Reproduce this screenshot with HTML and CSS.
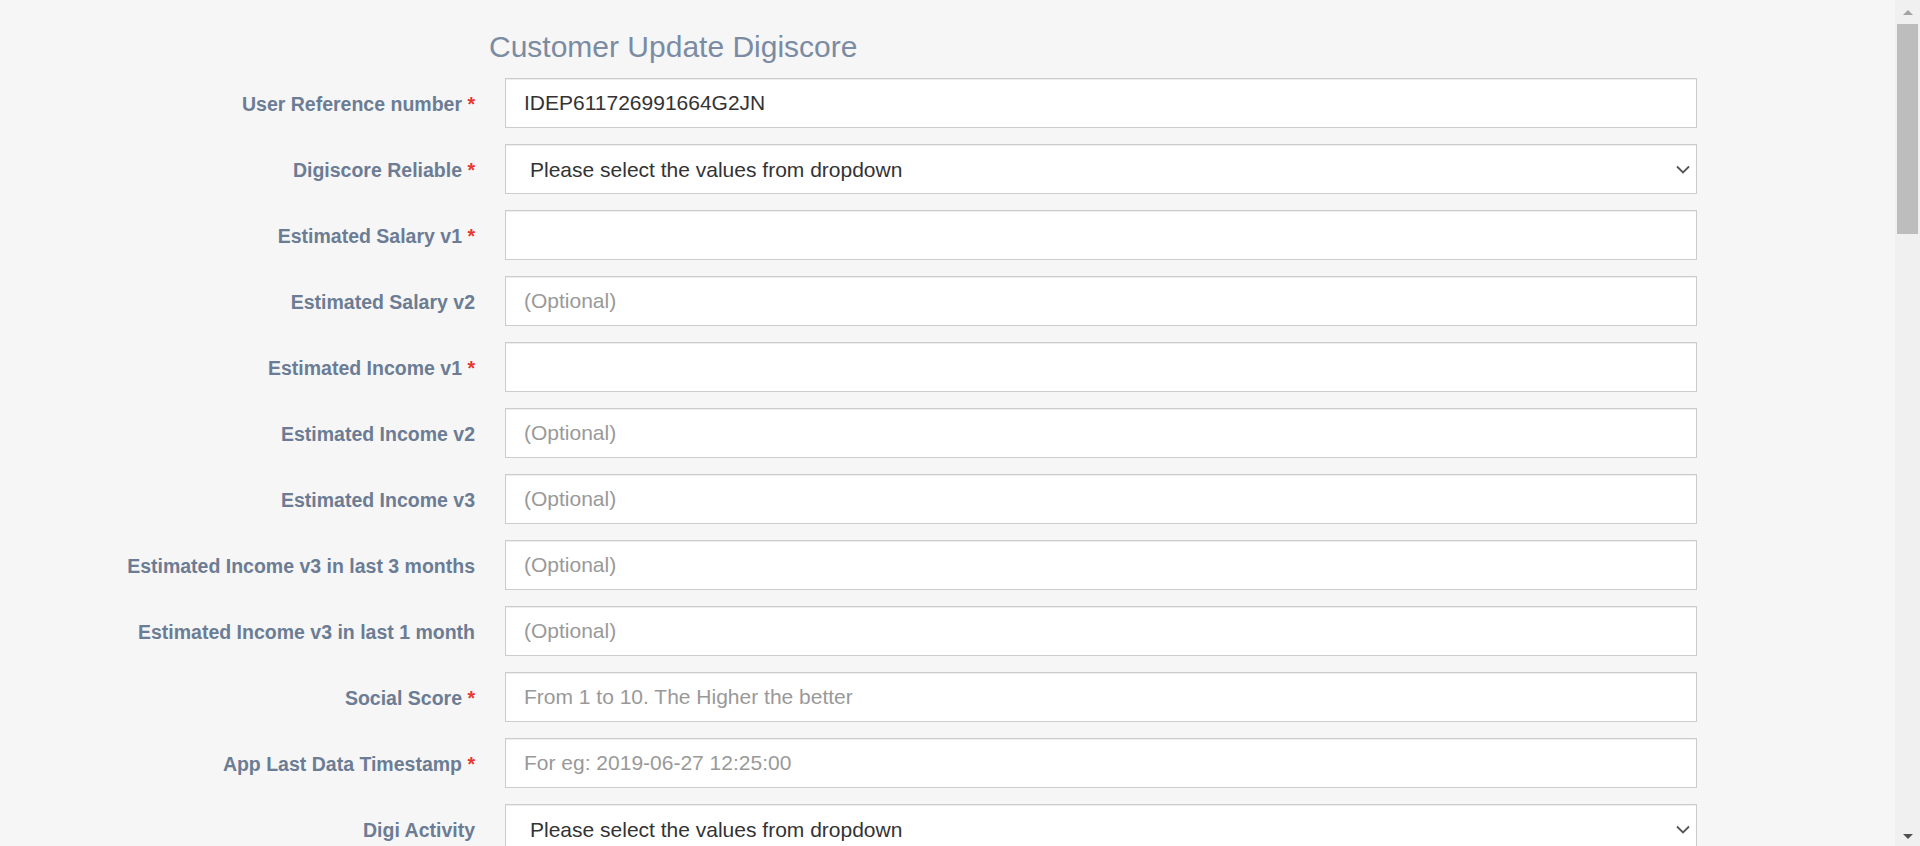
FILE: index.html
```html
<!DOCTYPE html>
<html lang="en">
<head>
<meta charset="utf-8">
<title>Customer Update Digiscore</title>
<link rel="stylesheet" href="styles.css">
</head>
<body>
<main class="page">
  <h2 class="title">Customer Update Digiscore</h2>
  <form class="form">
    <label class="lbl" for="f1">User Reference number <span class="req">*</span></label>
    <input class="ctl" id="f1" type="text" value="IDEP611726991664G2JN" autofocus>

    <label class="lbl" for="f2">Digiscore Reliable <span class="req">*</span></label>
    <div class="sel-wrap">
      <select class="ctl sel" id="f2"><option>Please select the values from dropdown</option></select>
      <svg class="chev" width="14" height="9" viewBox="0 0 14 9"><path d="M1 1.5 L7 7.5 L13 1.5" fill="none" stroke="#555" stroke-width="1.8"/></svg>
    </div>

    <label class="lbl" for="f3">Estimated Salary v1 <span class="req">*</span></label>
    <input class="ctl" id="f3" type="text">

    <label class="lbl" for="f4">Estimated Salary v2</label>
    <input class="ctl" id="f4" type="text" placeholder="(Optional)">

    <label class="lbl" for="f5">Estimated Income v1 <span class="req">*</span></label>
    <input class="ctl" id="f5" type="text">

    <label class="lbl" for="f6">Estimated Income v2</label>
    <input class="ctl" id="f6" type="text" placeholder="(Optional)">

    <label class="lbl" for="f7">Estimated Income v3</label>
    <input class="ctl" id="f7" type="text" placeholder="(Optional)">

    <label class="lbl" for="f8">Estimated Income v3 in last 3 months</label>
    <input class="ctl" id="f8" type="text" placeholder="(Optional)">

    <label class="lbl" for="f9">Estimated Income v3 in last 1 month</label>
    <input class="ctl" id="f9" type="text" placeholder="(Optional)">

    <label class="lbl" for="f10">Social Score <span class="req">*</span></label>
    <input class="ctl" id="f10" type="text" placeholder="From 1 to 10. The Higher the better">

    <label class="lbl" for="f11">App Last Data Timestamp <span class="req">*</span></label>
    <input class="ctl" id="f11" type="text" placeholder="For eg: 2019-06-27 12:25:00">

    <label class="lbl" for="f12">Digi Activity</label>
    <div class="sel-wrap">
      <select class="ctl sel" id="f12"><option>Please select the values from dropdown</option></select>
      <svg class="chev" width="14" height="9" viewBox="0 0 14 9"><path d="M1 1.5 L7 7.5 L13 1.5" fill="none" stroke="#555" stroke-width="1.8"/></svg>
    </div>
  </form>
</main>
<div class="scrollbar" aria-hidden="true">
  <div class="sb-btn"><span class="arrow-up"></span></div>
  <div class="sb-track"><div class="sb-thumb"></div></div>
  <div class="sb-btn"><span class="arrow-down"></span></div>
</div>
</body>
</html>
```

FILE: styles.css
```css
html, body {
  margin: 0;
  padding: 0;
  background: #f6f6f6;
}

body {
  display: flex;
  height: 100vh;
  overflow: hidden;
  font-family: "Liberation Sans", Arial, sans-serif;
  color: #333;
}

.page {
  flex: 1;
  min-width: 0;
  overflow: hidden;
  padding-top: 30px;
}

.title {
  margin: 0 0 15px 489px;
  font-size: 30px;
  line-height: 33px;
  font-weight: normal;
  color: #7a8ba3;
}

.form {
  display: grid;
  grid-template-columns: 475px 1192px;
  column-gap: 30px;
  row-gap: 16px;
  align-items: center;
}

.lbl {
  text-align: right;
  font-size: 19.5px;
  font-weight: bold;
  color: #6b7c94;
  padding-top: 3px;
  white-space: nowrap;
}

.req {
  color: #e8362f;
}

.ctl {
  box-sizing: border-box;
  width: 100%;
  height: 50px;
  margin: 0;
  padding: 0 18px;
  border: 1px solid #cccccc;
  border-radius: 0;
  background: #fff;
  box-shadow: inset 0 1px 1px rgba(0, 0, 0, 0.075);
  font-family: "Liberation Sans", Arial, sans-serif;
  font-size: 21px;
  color: #333;
  caret-color: #333;
  outline: none;
}

.ctl::placeholder {
  color: #999;
  opacity: 1;
}

.sel-wrap {
  position: relative;
}

.sel {
  display: block;
  appearance: none;
  -webkit-appearance: none;
  padding-left: 24px;
  color: #333;
}

.chev {
  position: absolute;
  right: 7px;
  top: 21px;
  pointer-events: none;
}

/* imitation of the browser scrollbar at the right edge */
.scrollbar {
  flex: 0 0 25px;
  height: 100vh;
  display: flex;
  flex-direction: column;
  background: #f0f0f0;
}

.sb-btn {
  flex: 0 0 23px;
  display: flex;
  align-items: center;
  justify-content: center;
}

.arrow-up {
  width: 0;
  height: 0;
  border-left: 5.5px solid transparent;
  border-right: 5.5px solid transparent;
  border-bottom: 5px solid #a3a3a3;
  margin-top: 2px;
}

.arrow-down {
  width: 0;
  height: 0;
  border-left: 5.5px solid transparent;
  border-right: 5.5px solid transparent;
  border-top: 5px solid #505050;
  margin-top: 4px;
}

.sb-track {
  flex: 1;
  padding: 1px 2px 0 2px;
}

.sb-thumb {
  height: 210px;
  background: #bdbdbd;
}
```
